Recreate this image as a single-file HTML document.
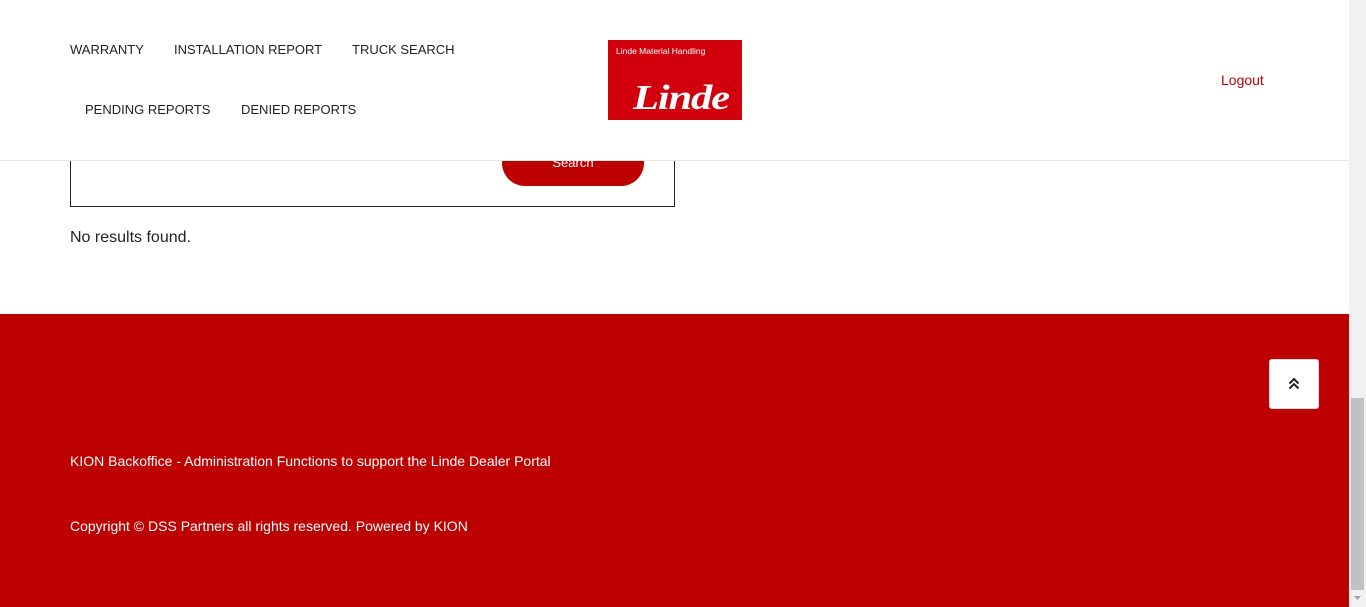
<!DOCTYPE html>
<html><head><meta charset="utf-8"><style>
*{margin:0;padding:0;box-sizing:border-box}
body{width:1366px;height:607px;overflow:hidden;position:relative;background:#fff;font-family:"Liberation Sans",Arial,sans-serif;color:#222}
.abs{position:absolute;white-space:nowrap}
.nav{font-size:13px;color:#222}
#hdr{position:absolute;left:0;top:0;width:1349px;height:161px;background:#fff;border-bottom:1px solid #e6e6e6;z-index:2}
#footer{position:absolute;left:0;top:314px;width:1349px;height:293px;background:#bd0000}
#sb{position:absolute;left:1349px;top:0;width:17px;height:607px;background:#f1f1f1}
</style></head><body>
<div class="abs" style="left:70px;top:131px;width:605px;height:76px;border:1px solid #222;border-top:none"></div>
<div class="abs" style="left:502px;top:140px;width:142px;height:46px;background:#bd0000;border-radius:23px;color:#fff;font-size:13px;text-align:center;line-height:46px">Search</div>
<div class="abs" style="left:70px;top:229px;font-size:16px;color:#222">No results found.</div>
<div id="hdr">
 <div class="abs nav" style="left:70px;top:42px">WARRANTY</div>
 <div class="abs nav" style="left:174px;top:42px">INSTALLATION REPORT</div>
 <div class="abs nav" style="left:352px;top:42px">TRUCK SEARCH</div>
 <div class="abs nav" style="left:85px;top:102px">PENDING REPORTS</div>
 <div class="abs nav" style="left:241px;top:102px">DENIED REPORTS</div>
 <div class="abs" style="left:608px;top:40px;width:134px;height:80px;background:#d2000c;overflow:hidden">
  <div class="abs" style="left:8px;top:6px;font-size:8.5px;color:#fff">Linde Material Handling</div>
  <div class="abs" style="left:25px;top:38px;font-family:'Liberation Serif',serif;font-style:italic;font-weight:bold;font-size:35px;color:#fff;letter-spacing:-1px;transform:scaleX(1.22);transform-origin:left">Linde</div>
 </div>
 <div class="abs" style="left:1221px;top:72px;font-size:14px;color:#bd0000">Logout</div>
</div>
<div id="footer">
 <div class="abs" style="left:1269px;top:45px;width:50px;height:50px;background:#fff;border-radius:3px;border:1px solid #ddd">
  <svg width="50" height="50" style="position:absolute;left:-1px;top:-1px"><path d="M20.5 24.5l4.5-4.5 4.5 4.5M20.5 29.5l4.5-4.5 4.5 4.5" fill="none" stroke="#222" stroke-width="2"/></svg>
 </div>
 <div class="abs" style="left:70px;top:139px;font-size:14px;color:#fff">KION Backoffice - Administration Functions to support the Linde Dealer Portal</div>
 <div class="abs" style="left:70px;top:204px;font-size:14px;color:#fff">Copyright © DSS Partners all rights reserved. Powered by KION</div>
</div>
<div id="sb">
 <div class="abs" style="left:2px;top:398px;width:13px;height:192px;background:#c1c1c1"></div>
 <svg class="abs" style="left:0;top:590px" width="17" height="17"><path d="M5 6h7l-3.5 4z" fill="#a3a3a3"/></svg>
</div>
</body></html>
